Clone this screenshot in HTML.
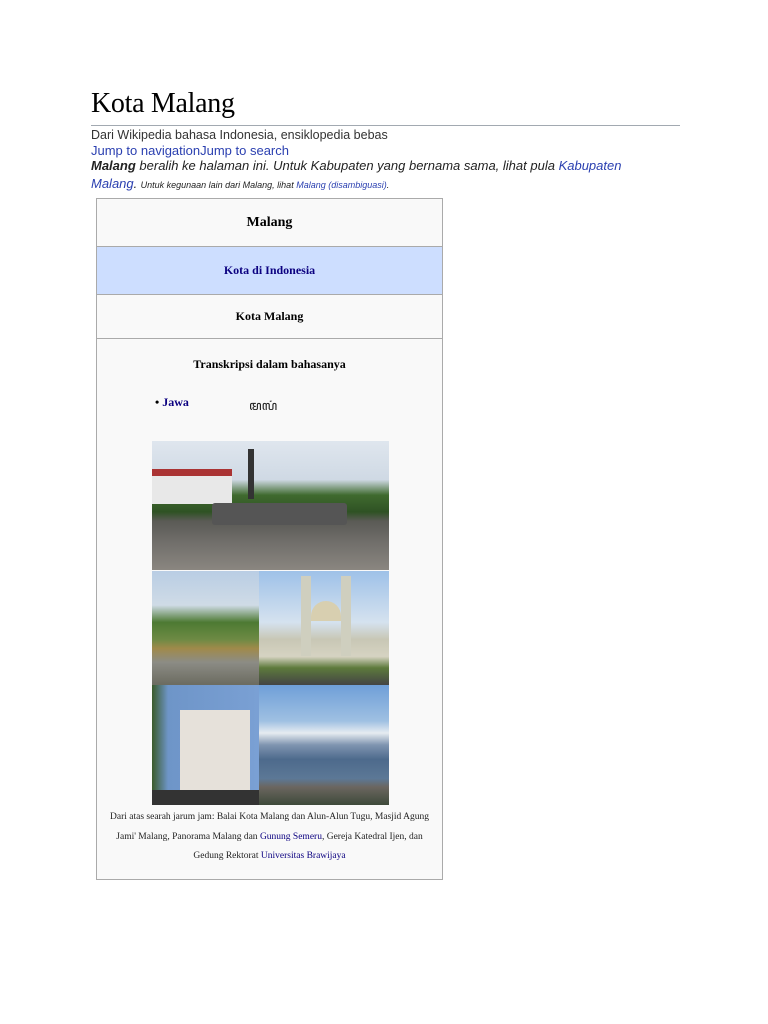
<!DOCTYPE html>
<html><head><meta charset="utf-8"><style>
body{margin:0;background:#fff;width:768px;height:1024px;position:relative;overflow:hidden;font-family:"Liberation Sans",sans-serif}
.a{position:absolute}
h1{position:absolute;left:91px;top:88px;margin:0;font:28px "Liberation Serif",serif;color:#000;letter-spacing:-0.3px}
.line{left:91px;top:125px;width:589px;height:1px;background:#a2a9b1}
.t{font-size:12.5px;color:#222;white-space:nowrap}
.blue{color:#2a3fb0}
.box{left:96px;top:198px;width:347px;height:682px;border:1px solid #aaa;background:#f9f9f9;box-sizing:border-box}
.row{position:absolute;left:0;width:345px;text-align:center;font:bold 12px "Liberation Serif",serif;color:#000;border-bottom:1px solid #aaa}
.ph{position:absolute;overflow:hidden}
</style></head><body>
<h1>Kota Malang</h1>
<div class="a line"></div>
<div class="a t" style="left:91px;top:128px;color:#333">Dari Wikipedia bahasa Indonesia, ensiklopedia bebas</div>
<div class="a t blue" style="left:91px;top:143px;font-size:13px">Jump to navigationJump to search</div>
<div class="a t" style="left:91px;top:158px;font-size:13px;font-style:italic"><b>Malang</b> beralih ke halaman ini. Untuk Kabupaten yang bernama sama, lihat pula <span class="blue">Kabupaten</span></div>
<div class="a t" style="left:91px;top:176px;font-style:italic"><span class="blue" style="font-size:13px">Malang</span>. <span style="font-size:9px">Untuk kegunaan lain dari Malang, lihat <span class="blue">Malang (disambiguasi)</span>.</span></div>
<div class="a box">
<div class="row" style="top:0;height:47px;line-height:47px;font-size:14px">Malang</div>
<div class="row" style="top:48px;height:47px;line-height:47px;background:#cddeff;color:#0b0080">Kota di Indonesia</div>
<div class="row" style="top:96px;height:43px;line-height:43px">Kota Malang</div>
<div class="row" style="top:158px;border:none">Transkripsi dalam bahasanya</div>
<div class="a" style="left:58px;top:196px;font:bold 12px 'Liberation Serif',serif;color:#0b0080"><span style="color:#000">•</span> Jawa</div>
<div class="a" style="left:152px;top:196px;font:13px 'Liberation Serif',serif;color:#222">ꦩꦭꦁ</div>
<div class="a" style="left:0;width:345px;text-align:center;font:9.5px/19.5px 'Liberation Serif',serif;color:#222;top:609px">Dari atas searah jarum jam: Balai Kota Malang dan Alun-Alun Tugu, Masjid Agung<br>Jami' Malang, Panorama Malang dan <span style="color:#0b0080">Gunung Semeru</span>, Gereja Katedral Ijen, dan<br>Gedung Rektorat <span style="color:#0b0080">Universitas Brawijaya</span></div>
</div>
<div class="ph" style="left:152px;top:441px;width:237px;height:129px;background:linear-gradient(#dfe6ee 0%,#cfd9e4 30%,#3f6a2e 42%,#2f5224 55%,#5a5a55 62%,#706e6a 78%,#8a8680 100%)">
<div class="a" style="left:0;top:28px;width:80px;height:28px;background:#e8e8e8;border-top:7px solid #a33"></div>
<div class="a" style="left:96px;top:8px;width:6px;height:50px;background:#333"></div>
<div class="a" style="left:60px;top:62px;width:135px;height:22px;background:#555;border-radius:3px"></div>
</div>
<div class="ph" style="left:152px;top:571px;width:107px;height:114px;background:linear-gradient(#b9cde4 0%,#cfdbe6 30%,#4d7a33 45%,#6d8a44 60%,#a08a4a 68%,#8c8c85 80%,#6b6b60 100%)"></div>
<div class="ph" style="left:259px;top:571px;width:130px;height:114px;background:linear-gradient(#9ec1e8 0%,#d5e2ef 45%,#c8c7b5 60%,#d6d3c2 75%,#5d7a3c 85%,#444 100%)">
<div class="a" style="left:42px;top:5px;width:10px;height:80px;background:#cfcfbf"></div>
<div class="a" style="left:82px;top:5px;width:10px;height:80px;background:#cfcfbf"></div>
<div class="a" style="left:52px;top:30px;width:30px;height:20px;background:#d8cfb0;border-radius:15px 15px 0 0"></div>
</div>
<div class="ph" style="left:152px;top:685px;width:107px;height:120px;background:linear-gradient(90deg,#3a5a2a 0%,#6e95c8 15%,#7aa0d4 100%)">
<div class="a" style="left:28px;top:25px;width:70px;height:85px;background:#e6e1da"></div>
<div class="a" style="left:0;top:105px;width:107px;height:15px;background:#333"></div>
</div>
<div class="ph" style="left:259px;top:685px;width:130px;height:120px;background:linear-gradient(#6f9fd8 0%,#9fc0e2 30%,#e6ecf1 40%,#7f94b0 50%,#4d6a8c 62%,#5c7896 78%,#6b6660 85%,#3e4a3a 100%)"></div>
</body></html>
